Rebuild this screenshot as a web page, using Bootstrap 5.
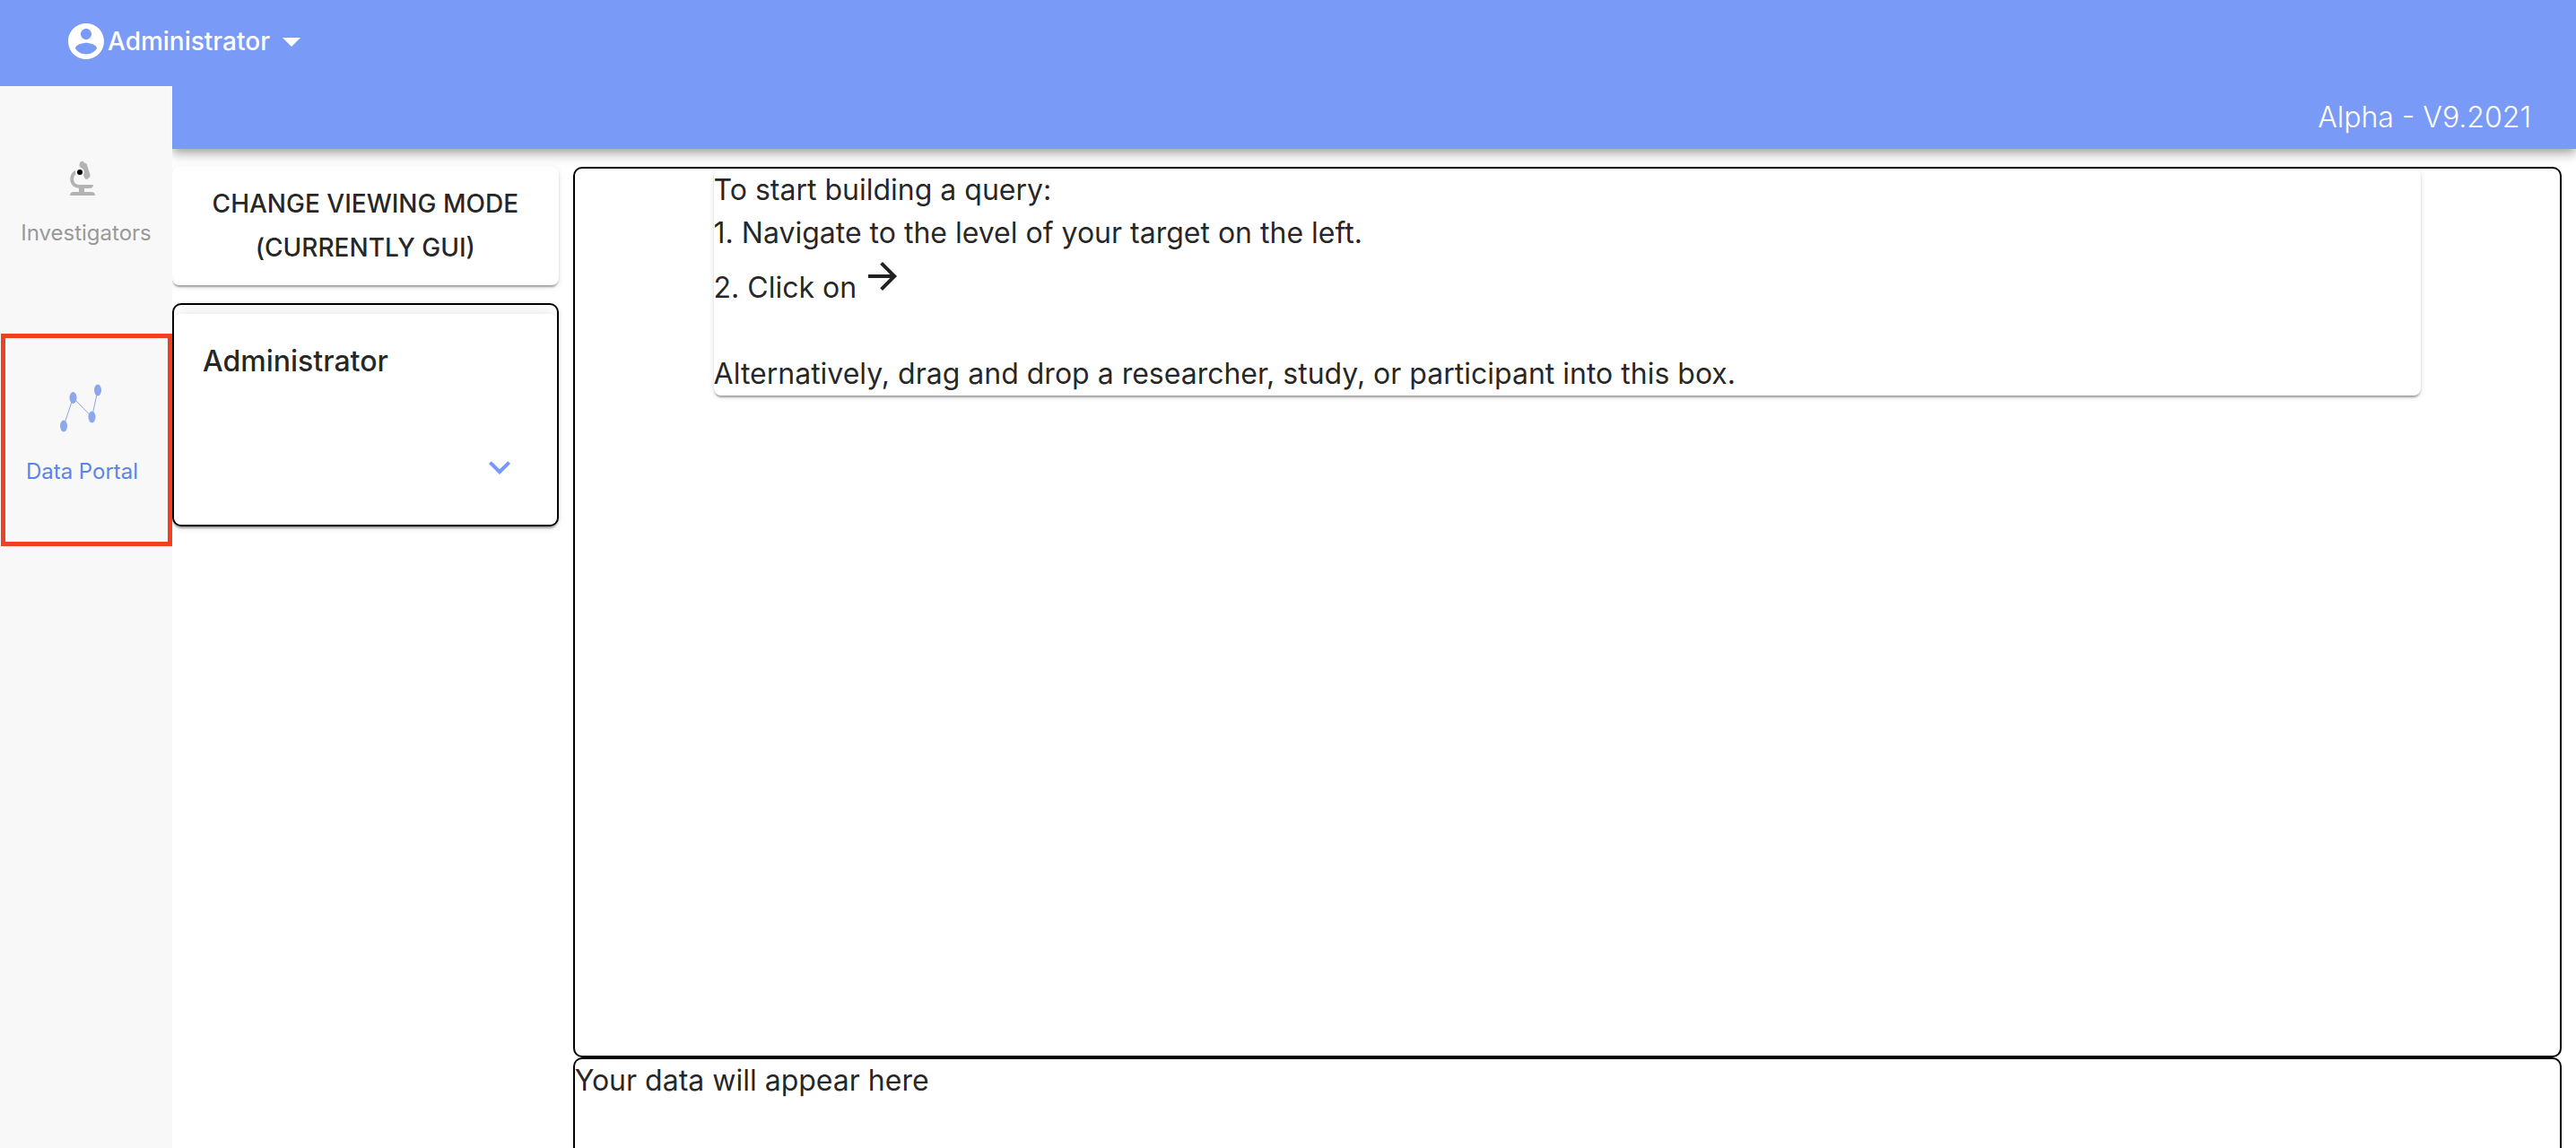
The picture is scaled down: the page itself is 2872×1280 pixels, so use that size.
<!DOCTYPE html>
<html lang="en">
<head>
<meta charset="utf-8">
<meta name="viewport" content="width=device-width, initial-scale=1">
<title>Data Portal</title>
<link href="https://cdn.jsdelivr.net/npm/bootstrap@5.3.0/dist/css/bootstrap.min.css" rel="stylesheet">
<style>
  :root { --portal-blue: #7599ff; --portal-band: #7a9af7; }
  body { font-family: Inter, "Liberation Sans", sans-serif; font-size: 32px; line-height: 48px; color: rgba(0,0,0,.87); background: #fff; }
  .topbar { height: 96px; background: var(--portal-band); padding: 0 72px; z-index: 3; }
  .account { font-size: 28px; line-height: 48px; font-weight: 500; color: #fff; padding: 22px 0; }
  .account:hover, .account:active { color: #fff; }
  .side { width: 192px; background: #f8f8f8; z-index: 2; }
  .side-link { font-size: 24px; line-height: 36px; color: #999; text-decoration: none; }
  .side-first { height: 276px; padding-top: 80px; gap: 18px; }
  .side-second { height: 237px; padding-top: 48px; gap: 23px; margin-left: 1px; border: 5px solid #ef4023; color: #5c83e8; }
  .side-second span { padding-right: 10px; }
  .side-link svg { margin-right: 8px; }
  .side-second svg { margin-right: 10px; }
  .version { height: 70px; background: var(--portal-band); color: #fff; font-weight: 300; padding: 11px 50px; box-shadow: 0 4px 8px -2px rgba(0,0,0,.2), 0 8px 10px rgba(0,0,0,.14), 0 2px 20px rgba(0,0,0,.12); }
  .work { padding-top: 20px; z-index: 1; }
  .work > div { padding: 0 16px 0 0; }
  .raised { background: #fff; border-radius: 8px; box-shadow: 0 4px 2px -2px rgba(0,0,0,.2), 0 2px 2px rgba(0,0,0,.14), 0 2px 6px rgba(0,0,0,.12); }
  .mode { font-size: 28px; line-height: 49px; font-weight: 500; padding: 17px 32px; color: inherit; border: 0; }
  .frame { border: 2px solid #000; border-radius: 10px; background: #fff; }
  .owner { margin-top: 20px; height: 249px; padding-top: 10px; overflow: hidden; }
  .owner-body { height: 100%; border-radius: 8px; background: #fff; padding: 29px 32px 24px; box-shadow: 0 2px 20px rgba(0,0,0,.14); }
  .owner h2 { font-size: 32px; line-height: 48px; font-weight: 500; }
  .expand { color: var(--portal-blue); line-height: 0; margin: 0 8px 16px 0; }
  .hint { width: 86%; }
  .arrow { vertical-align: baseline; margin-left: 5px; }
  .results { height: 101px; border-bottom: 0; border-bottom-left-radius: 0; border-bottom-right-radius: 0; }
</style>
<script src="https://cdn.jsdelivr.net/npm/bootstrap@5.3.0/dist/js/bootstrap.bundle.min.js"></script>
</head>
<body>
<div class="d-flex flex-column vh-100 overflow-hidden">
  <header class="topbar position-relative flex-shrink-0">
    <button class="account btn border-0 d-inline-flex align-items-center" type="button">
      <svg width="48" height="48" viewBox="0 0 24 24" fill="currentColor" aria-hidden="true"><path d="M12 2C6.480 2 2 6.480 2 12s4.480 10 10 10 10-4.480 10-10S17.520 2 12 2zm0 3c1.660 0 3 1.340 3 3s-1.340 3-3 3-3-1.340-3-3 1.340-3 3-3zm0 14.200c-2.500 0-4.710-1.280-6-3.220.030-1.990 4-3.080 6-3.080 1.990 0 5.970 1.090 6 3.080-1.290 1.940-3.500 3.220-6 3.220z"/></svg>
      <span>Administrator</span>
      <svg width="48" height="48" viewBox="0 0 24 24" fill="currentColor" aria-hidden="true"><path d="M7 10l5 5 5-5z"/></svg>
    </button>
  </header>
  <div class="d-flex flex-grow-1">
    <nav class="side position-relative flex-shrink-0 d-flex flex-column" aria-label="Sections">
      <a class="side-link side-first d-flex flex-column align-items-center" href="#">
        <svg width="48" height="48" viewBox="0 0 48 48" aria-hidden="true">
          <path d="M20.500 7l1-2.500 3-1L26 5.500l2.500 1L32.500 19v2l-2 1.500-1 1.500-2.500-.500-1.500-3L22 11l-1.500-2z" fill="#b3b3b3"/>
          <path d="M17 15.500C9.500 19.500 10.500 32 21 32" fill="none" stroke="#b3b3b3" stroke-width="4"/>
          <path d="M20 30h16c0 2.500-1.500 4-4 4h-6v4h8c2.500 0 4 1.500 4 4H10c0-2.500 1.500-4 4-4h6z" fill="#b3b3b3"/>
          <circle cx="21" cy="16" r="5" fill="#f8f8f8"/><circle cx="21" cy="16" r="3" fill="#000"/>
        </svg>
        <span>Investigators</span>
      </a>
      <a class="side-link side-second d-flex flex-column align-items-center" href="#" aria-current="page">
        <svg width="60" height="60" viewBox="0 0 60 60" fill="#8da7ec" aria-hidden="true">
          <path d="M9 50L19.500 18.500L40.500 40L47 10" fill="none" stroke="#8da7ec"/>
          <ellipse cx="9" cy="50" rx="4" ry="6.500"/><ellipse cx="19.500" cy="18.500" rx="4" ry="6.500"/><ellipse cx="40.500" cy="40" rx="4" ry="6.500"/><ellipse cx="47" cy="10" rx="4" ry="6.500"/>
        </svg>
        <span>Data Portal</span>
      </a>
    </nav>
    <main class="flex-grow-1 d-flex flex-column">
      <div class="version text-end">Alpha - V9.2021</div>
      <div class="work row g-0 flex-grow-1 position-relative">
        <div class="col-2">
          <button class="raised mode w-100 text-uppercase d-block" type="button">Change viewing mode (currently GUI)</button>
          <section class="owner raised frame">
            <div class="owner-body d-flex flex-column justify-content-between">
              <h2 class="m-0">Administrator</h2>
              <button class="expand btn p-0 border-0 align-self-end" type="button" aria-label="Expand">
                <svg width="48" height="48" viewBox="0 0 24 24" fill="currentColor" aria-hidden="true"><path d="M16.590 8.590L12 13.170 7.410 8.590 6 10l6 6 6-6z"/></svg>
              </button>
            </div>
          </section>
        </div>
        <div class="col-10 d-flex flex-column">
          <section class="frame flex-grow-1">
            <div class="hint raised mx-auto">
              <div>To start building a query:</div>
              <div>1. Navigate to the level of your target on the left.</div>
              <div>2. Click on<svg class="arrow" width="48" height="48" viewBox="0 0 24 24" fill="currentColor" aria-hidden="true"><path d="M12 4l-1.410 1.410L16.170 11H4v2h12.170l-5.580 5.590L12 20l8-8z"/></svg></div>
              <br>
              <div>Alternatively, drag and drop a researcher, study, or participant into this box.</div>
            </div>
          </section>
          <section class="frame results">Your data will appear here</section>
        </div>
      </div>
    </main>
  </div>
</div>
</body>
</html>
